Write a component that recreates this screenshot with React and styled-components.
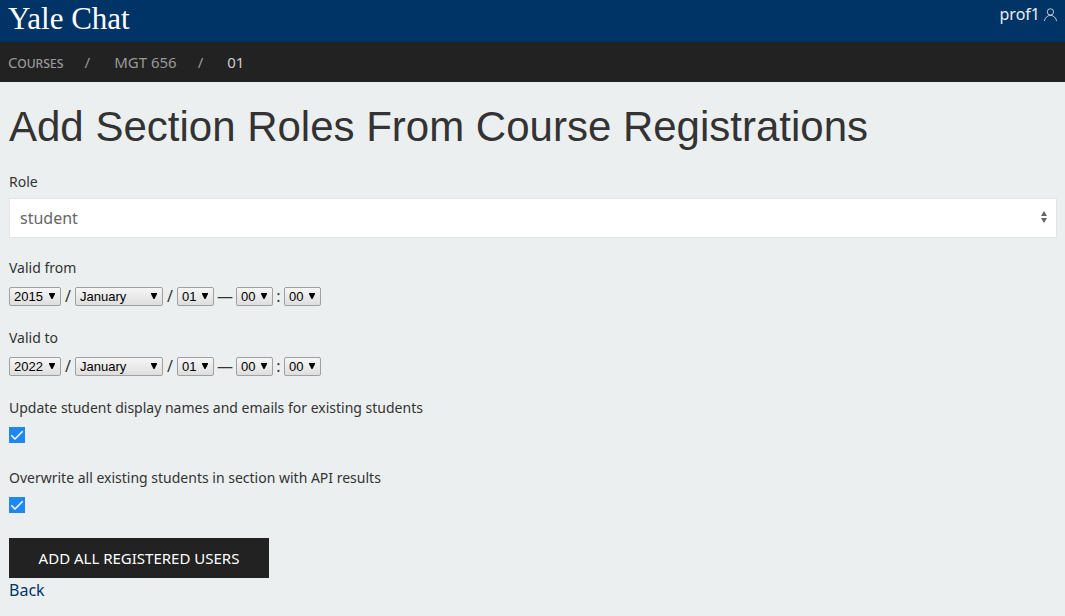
import React from "react";
import styled, { createGlobalStyle } from "styled-components";

const sans = `"Noto Sans", "Open Sans", sans-serif`;

const GlobalStyle = createGlobalStyle`
  *, *::before, *::after { box-sizing: border-box; }
  body {
    margin: 0;
    background: #ebeff0;
    color: #333;
    font-family: ${sans};
    font-size: 16px;
    line-height: 24px;
  }
`;

const Header = styled.header`
  display: flex;
  justify-content: space-between;
  align-items: flex-start;
  height: 42px;
  padding: 0 8px;
  background: #003366;
  color: #fff;
`;

const Brand = styled.a`
  color: #fff;
  font-family: "Liberation Serif", serif;
  font-size: 31px;
  line-height: 38px;
  text-decoration: none;
`;

const Account = styled.a`
  display: flex;
  align-items: center;
  gap: 4px;
  padding-top: 2px;
  color: #ebeff0;
  font-size: 16px;
  text-decoration: none;
`;

const Breadcrumb = styled.nav`
  background: #222;

  ol {
    display: flex;
    align-items: center;
    height: 40px;
    margin: 0;
    padding: 0 8px;
    list-style: none;
    font-size: 15px;
    line-height: 20px;
  }

  li + li::before {
    content: "/";
    margin: 0 24px 0 21px;
    color: #999;
  }
`;

const Crumb = styled.a`
  color: #999;
  font-variant: ${(p) => (p.$smallCaps ? "small-caps" : "normal")};
  text-decoration: none;
`;

const CurrentCrumb = styled.span`
  color: #ccc;
`;

const Main = styled.main`
  padding: 20px 8px 14px 9px;
`;

const Title = styled.h1`
  margin: 0 0 20px;
  font-family: "Liberation Sans", sans-serif;
  font-size: 42px;
  font-weight: 400;
  line-height: 50px;
`;

const Field = styled.div`
  display: flex;
  flex-direction: column;
  gap: 6px;
  margin-bottom: 20px;
`;

const Label = styled.label`
  align-self: flex-start;
  font-size: 14px;
  line-height: 20px;
`;

const Controls = styled.div`
  display: flex;
  align-items: center;
  height: 24px;
`;

const Separator = styled.span`
  display: flex;
  justify-content: center;
  width: ${(p) => p.$width}px;
`;

const CheckRow = styled.div`
  display: flex;
  height: 24px;
  padding: 3px 0 5px;
`;

const SelectBox = styled.div`
  display: grid;
  align-items: center;

  > * { grid-area: 1 / 1; }
  > svg { justify-self: end; pointer-events: none; }
`;

const RoleSelect = styled.select`
  appearance: none;
  width: 100%;
  height: 40px;
  padding: 0 20px 0 10px;
  border: 1px solid #e5e5e5;
  border-radius: 0;
  background: #fff;
  color: #666;
  font: 16px ${sans};
`;

const RoleArrows = styled.svg`
  margin-right: 10px;
  fill: #666;
`;

const DateSelect = styled.select`
  appearance: none;
  width: ${(p) => p.$width}px;
  height: 19px;
  padding: 0 0 0 4px;
  border: 1px solid #a0a0a0;
  border-radius: 2px;
  background: linear-gradient(#f6f6f6, #dedede);
  color: #000;
  font: 13px "Liberation Sans", sans-serif;
`;

const DateArrow = styled.svg`
  margin-right: 6px;
  fill: #000;
`;

const Checkbox = styled.input`
  appearance: none;
  width: 16px;
  height: 16px;
  margin: 0;
  background: #fff;
  &:checked { background: #1e87f0; }
`;

const Tick = styled.svg`
  fill: none;
  stroke: #fff;
  stroke-width: 1.5;
`;

const SubmitButton = styled.button`
  display: block;
  min-width: 260px;
  height: 40px;
  padding: 0 20px;
  border: 0;
  background: #222;
  color: #fff;
  font: 15px ${sans};
  text-transform: uppercase;
`;

const BackLink = styled.a`
  color: #003366;
  font-size: 16px;
  text-decoration: none;
`;

const range = (from, to) =>
  Array.from({ length: to - from + 1 }, (_, i) => String(from + i).padStart(2, "0"));

const MONTHS = [
  "January", "February", "March", "April", "May", "June", "July",
  "August", "September", "October", "November", "December",
];

function DatePart({ id, label, width, value, options }) {
  return (
    <SelectBox>
      <DateSelect id={id} aria-label={label} $width={width} defaultValue={value}>
        {options.map((o) => <option key={o}>{o}</option>)}
      </DateSelect>
      <DateArrow width="6" height="9" viewBox="0 0 6 9" aria-hidden="true">
        <path d="M0 1H6V2L3.5 7H2.5L0 2Z" />
      </DateArrow>
    </SelectBox>
  );
}

function DateTimeField({ id, label, year }) {
  return (
    <Field>
      <Label htmlFor={id}>{label}</Label>
      <Controls>
        <DatePart id={id} width={52} value={year} options={range(2015, 2025)} />
        <Separator $width={14}>/</Separator>
        <DatePart label={`${label} month`} width={88} value="January" options={MONTHS} />
        <Separator $width={14}>/</Separator>
        <DatePart label={`${label} day`} width={37} value="01" options={range(1, 31)} />
        <Separator $width={22}>—</Separator>
        <DatePart label={`${label} hour`} width={37} value="00" options={range(0, 23)} />
        <Separator $width={11}>:</Separator>
        <DatePart label={`${label} minute`} width={37} value="00" options={range(0, 59)} />
      </Controls>
    </Field>
  );
}

function CheckField({ id, label }) {
  return (
    <Field>
      <Label htmlFor={id}>{label}</Label>
      <CheckRow>
        <SelectBox>
          <Checkbox id={id} type="checkbox" defaultChecked />
          <Tick width="16" height="16" viewBox="0 0 16 16" aria-hidden="true">
            <path d="M2.3 8.3L6 12L13.7 4.3" />
          </Tick>
        </SelectBox>
      </CheckRow>
    </Field>
  );
}

export default function App() {
  return (
    <>
      <GlobalStyle />
      <Header>
        <Brand href="#">Yale Chat</Brand>
        <Account href="#">
          prof1
          <svg width="13" height="15" viewBox="1 0 18 20" fill="none" stroke="currentColor" strokeWidth="1.1" aria-hidden="true">
            <circle cx="9.9" cy="6.4" r="4.4" />
            <path d="M1.5,19 C2.3,14.5 5.8,11.2 10,11.2 C14.2,11.2 17.7,14.6 18.5,19.2" />
          </svg>
        </Account>
      </Header>
      <Breadcrumb aria-label="Breadcrumb">
        <ol>
          <li><Crumb href="#" $smallCaps>Courses</Crumb></li>
          <li><Crumb href="#">MGT 656</Crumb></li>
          <li><CurrentCrumb>01</CurrentCrumb></li>
        </ol>
      </Breadcrumb>
      <Main>
        <Title>Add Section Roles From Course Registrations</Title>
        <form onSubmit={(e) => e.preventDefault()}>
          <Field>
            <Label htmlFor="role">Role</Label>
            <SelectBox>
              <RoleSelect id="role" defaultValue="student">
                <option>student</option>
                <option>instructor</option>
              </RoleSelect>
              <RoleArrows width="6" height="14" viewBox="0 0 6 14" aria-hidden="true">
                <path d="M3 0L6 5H0ZM0 7H6L3 12Z" />
              </RoleArrows>
            </SelectBox>
          </Field>
          <DateTimeField id="valid-from" label="Valid from" year="2015" />
          <DateTimeField id="valid-to" label="Valid to" year="2022" />
          <CheckField id="update-names" label="Update student display names and emails for existing students" />
          <CheckField id="overwrite" label="Overwrite all existing students in section with API results" />
          <SubmitButton type="submit">Add all registered users</SubmitButton>
        </form>
        <BackLink href="#">Back</BackLink>
      </Main>
    </>
  );
}
